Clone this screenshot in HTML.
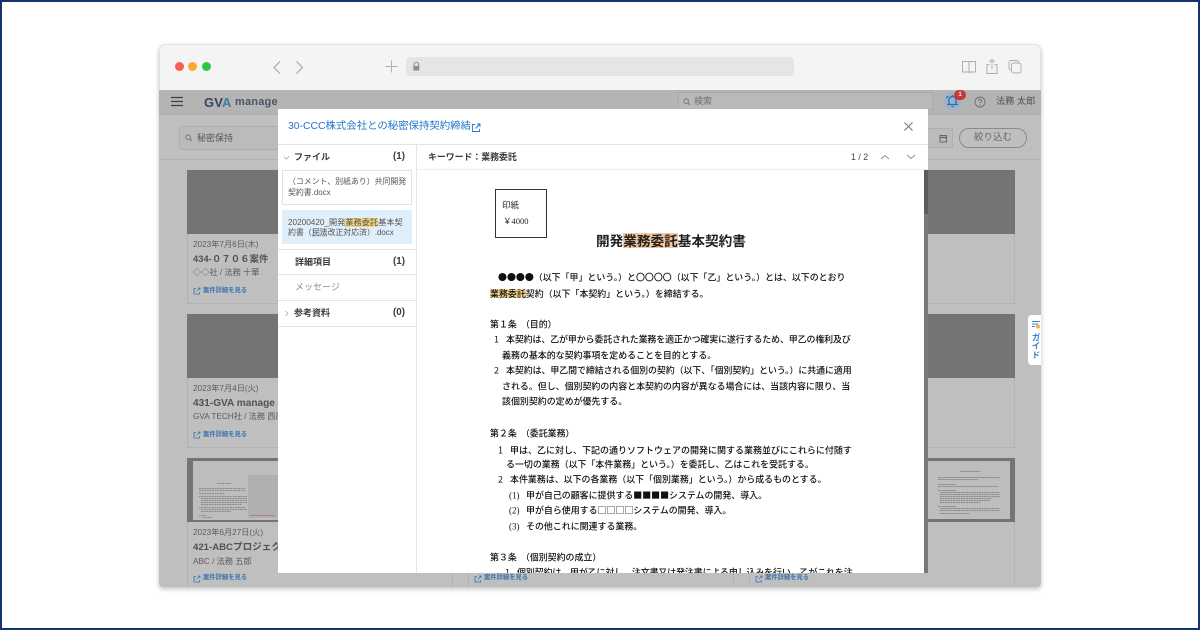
<!DOCTYPE html>
<html lang="ja"><head><meta charset="utf-8"><title>GVA manage</title>
<style>
*{box-sizing:border-box;margin:0;padding:0}
html,body{width:1200px;height:630px;overflow:hidden;background:#fff}
body{position:relative;font-family:"Liberation Sans","Noto Sans CJK JP",sans-serif}
#frame{position:absolute;inset:0;border:2px solid #12336b;z-index:50;pointer-events:none}
#blur{position:absolute;left:0;top:0;width:1200px;height:630px;filter:blur(.3px)}
.a{position:absolute}
.t{position:absolute;white-space:nowrap;line-height:1}
#win{position:absolute;left:159px;top:44px;width:882px;height:543px;border-radius:6px 6px 4px 4px;overflow:hidden;box-shadow:0 2px 5px rgba(0,0,0,.25)}
.card{position:absolute;width:266px;border:1px solid #b3b3b3;background:#bfbfbf}
.thumb{position:absolute;left:187px;width:266px;height:64px;background:#747474}
.d{position:absolute;white-space:nowrap;line-height:1;font-size:8.95px;color:#111;font-weight:500;transform:translateY(-50%);font-family:"Noto Sans CJK JP",sans-serif}
.n{display:inline-block;width:12px;font-weight:400}
.m{display:inline-block;width:17px;font-weight:400;font-family:"Liberation Serif",serif}
.date{font-size:8.2px;color:#5c5c5c}
.sub{font-size:8.2px;color:#5c5c5c}
.lnk{font-size:6.3px;font-weight:700;color:#3e75ae}
.h{font-size:9px;font-weight:700;color:#3c3c3c}
.c{font-size:9.800px;font-weight:700;color:#3c3c3c}
.f8{font-size:7.900px;color:#555}
mark{display:inline-block;line-height:1.1}
mark.y{background:#f8d88d;color:inherit}
mark.o{background:#f6c79d;color:inherit}
mark.f{background:#f3d47c;color:inherit}
</style></head><body>
<div id="blur">
<div id="win"></div>
<div class="a" style="left:159px;top:44px;width:882px;height:46px;background:#f4f4f4;border-radius:6px 6px 0 0;border:1px solid #e2e2e2;border-bottom:0"></div>
<div class="a" style="left:175px;top:62px;width:9px;height:9px;border-radius:50%;background:#f65f57"></div>
<div class="a" style="left:188px;top:62px;width:9px;height:9px;border-radius:50%;background:#f9a92f"></div>
<div class="a" style="left:202px;top:62px;width:9px;height:9px;border-radius:50%;background:#2fc544"></div>
<svg class="a" style="left:270px;top:58px" width="38" height="18" fill="none" stroke="#a0a0a0" stroke-width="1"><path d="M10 3.500 4 9.500l6 6M26.500 3.500l6 6-6 6"/></svg>
<svg class="a" style="left:384px;top:59px" width="15" height="15" fill="none" stroke="#b0b0b0" stroke-width="1"><path d="M7.500 1.500v12M1.500 7.500h12"/></svg>
<div class="a" style="left:406px;top:57px;width:388px;height:19px;background:#e5e5e5;border-radius:4px"></div>
<svg class="a" style="left:412px;top:61px" width="9" height="11"><path d="M2 5V3.500a2.300 2.300 0 0 1 4.600 0V5" fill="none" stroke="#8e8e8e"/><rect x="1.300" y="5" width="6" height="4.500" rx=".6" fill="#8e8e8e"/></svg>
<svg class="a" style="left:960px;top:58px" width="64" height="18" fill="none" stroke="#ababab" stroke-width=".9">
<path d="M2.500 3.500h5.500q1 0 1 1 0-1 1-1h5.500v10.500H10q-1 0-1 1 0-1-1-1H2.500zM9 4.500V15"/>
<path d="M29.500 6.500H27V15.500h10V6.500h-2.500M32 11V1.500M29.500 4 32 1.500 34.500 4"/>
<rect x="49" y="2.500" width="9.500" height="9.500" rx="2"/><rect x="51.500" y="5" width="9.500" height="10" rx="2" fill="#f4f4f4"/>
</svg>

<!-- app -->
<div class="a" style="left:159px;top:90px;width:882px;height:497px;background:#bfbfbf;border-radius:0 0 4px 4px"></div>
<div class="a" style="left:159px;top:90px;width:882px;height:25px;background:#b4b4b4;border-bottom:1px solid #adadad"></div>
<svg class="a" style="left:170px;top:96px" width="14" height="11" stroke="#33404f" stroke-width="1.300"><path d="M1 1.500h12M1 5.500h12M1 9.500h12"/></svg>
<div class="t" style="left:204px;top:96px;font-size:13px;font-weight:700;color:#34465f;letter-spacing:.1px">GV<span style="color:#3a7f9f">A</span></div>
<div class="t" style="left:235px;top:97px;font-size:11px;font-weight:700;color:#4a5563;letter-spacing:.2px">manage</div>
<div class="a" style="left:678px;top:92px;width:255px;height:18px;border:1px solid #a9a9a9;background:#b9b9b9"></div>
<svg class="a" style="left:683px;top:98px" width="8" height="8" fill="none" stroke="#777"><circle cx="3.200" cy="3.200" r="2.300"/><path d="M5 5l2 2"/></svg>
<div class="t" style="left:694px;top:97px;font-size:9px;color:#6e6e6e">検索</div>
<div class="a" style="left:944px;top:92px;width:17px;height:18px;border-radius:50%;background:#9fb2c4"></div>
<svg class="a" style="left:945px;top:93px" width="15" height="15" fill="none" stroke="#1672c8" stroke-width="1.300"><path d="M2 11.500h11M4 11.500V7a3.500 3.500 0 0 1 7 0v4.500M6.500 13.500h2M7.500 2v1.300M1.500 5 3 3M13.500 5 12 3"/></svg>
<div class="a" style="left:954px;top:90px;width:12px;height:10px;border-radius:5px;background:#c23a36;color:#eee;font-size:6.500px;font-weight:700;text-align:center;line-height:10px">1</div>
<svg class="a" style="left:974px;top:96px" width="12" height="12" fill="none" stroke="#6e6e6e" stroke-width=".9"><circle cx="6" cy="6" r="5"/><path d="M4.500 4.700a1.500 1.500 0 1 1 2.300 1.300c-.6.400-.8.700-.8 1.300M6 8.500v1"/></svg>
<div class="t" style="left:996px;top:97px;font-size:9.200px;color:#505050">法務 太郎</div>

<div class="a" style="left:159px;top:159px;width:882px;height:1px;background:#b1b1b1"></div>
<div class="a" style="left:179px;top:126px;width:110px;height:24px;border:1px solid #aeaeae;background:#bbb;border-radius:3px"></div>
<svg class="a" style="left:185px;top:134px" width="8" height="8" fill="none" stroke="#777"><circle cx="3.200" cy="3.200" r="2.300"/><path d="M5 5l2 2"/></svg>
<div class="t" style="left:197px;top:134px;font-size:9px;color:#555">秘密保持</div>
<div class="a" style="left:920px;top:128px;width:33px;height:20px;border:1px solid #aeaeae;background:#bbb"></div>
<svg class="a" style="left:939px;top:134px" width="9" height="9" fill="none" stroke="#666"><rect x="1" y="1.500" width="6.500" height="6.500"/><path d="M1 3.500h6.500" stroke-width="1.300"/></svg>
<div class="a" style="left:959px;top:128px;width:68px;height:20px;border:1px solid #8b8b8b;border-radius:10px;text-align:center;font-size:9.500px;line-height:18px;color:#666">絞り込む</div>

<!-- cards -->
<div class="card" style="left:187px;top:170px;height:134px"></div>
<div class="card" style="left:187px;top:314px;height:134px"></div>
<div class="card" style="left:187px;top:458px;height:129px;border-bottom:0"></div>
<div class="card" style="left:468px;top:458px;height:129px;border-bottom:0"></div>
<div class="card" style="left:749px;top:170px;height:134px"></div>
<div class="card" style="left:749px;top:314px;height:134px"></div>
<div class="card" style="left:749px;top:458px;height:129px;border-bottom:0"></div>
<div class="thumb" style="top:170px"></div>
<div class="thumb" style="top:314px"></div>
<div class="thumb" style="top:458px"></div>
<div class="thumb" style="left:749px;top:170px"></div>
<div class="thumb" style="left:749px;top:314px"></div>
<div class="thumb" style="left:749px;top:458px"></div>

<div class="a" style="left:193px;top:461px;width:85px;height:59px;background:#bdbdbd"></div>
<div class="a" style="left:248px;top:475px;width:30px;height:43px;background:#b0b0b0"></div>
<svg class="a" style="left:198px;top:480px" width="80" height="40" stroke="#6f6f6f" stroke-width=".6" stroke-dasharray="2 .6">
<path d="M19 3.300h14M1 8.300h46M1 10.300h46M1 13.300h26M1 16.300h48M3 18.300h46M3 20.300h46M3 22.300h46M3 24.300h40M1 27.300h46M3 29.300h46M3 31.300h30M1 35.300h8"/>
<path d="M4 37.300h10M52 35.300h25" stroke="#a5676f" stroke-dasharray="none"/></svg>
<div class="a" style="left:760px;top:461px;width:250px;height:58px;background:#bdbdbd"></div>
<svg class="a" style="left:930px;top:465px" width="80" height="50" stroke="#6d6d6d" stroke-width=".6" stroke-dasharray="2 .6">
<path d="M30 6.300h20M8 12.300h62M8 14.300h40M8 19.300h18M8 21.300h60M8 25.300h18M10 27.300h60M10 29.300h60M10 31.300h60M10 33.300h52M10 35.300h50M10 37.300h40M8 41.300h18M10 43.300h60M10 45.300h60M10 48.300h30"/></svg>

<div class="t date" style="left:193px;top:241px">2023年7月6日(木)</div>
<div class="t" style="left:193px;top:255px;font-size:9.300px;font-weight:700;color:#525252;letter-spacing:.1px">434-０７０６案件</div>
<div class="t sub" style="left:193px;top:269px">◇◇社 / 法務 十華</div>
<div class="t lnk" style="left:203px;top:288px">案件詳細を見る</div>
<div class="t date" style="left:193px;top:385px">2023年7月4日(火)</div>
<div class="t" style="left:193px;top:399px;font-size:10.100px;font-weight:700;color:#525252">431-GVA manage</div>
<div class="t sub" style="left:193px;top:413px">GVA TECH社 / 法務 西尾</div>
<div class="t lnk" style="left:203px;top:432px">案件詳細を見る</div>
<div class="t date" style="left:193px;top:529px">2023年6月27日(火)</div>
<div class="t" style="left:193px;top:543px;font-size:9.600px;font-weight:700;color:#525252">421-ABCプロジェクト</div>
<div class="t sub" style="left:193px;top:558px">ABC / 法務 五郎</div>
<div class="t lnk" style="left:203px;top:575px">案件詳細を見る</div>
<div class="t lnk" style="left:484px;top:575px">案件詳細を見る</div>
<div class="t lnk" style="left:765px;top:575px">案件詳細を見る</div>
<svg class="a" style="left:193px;top:287px" width="8" height="8" fill="none" stroke="#3e75ae" stroke-width=".8"><path d="M3 1.500H1v5.500h5.500V5M4 4l3-3M5 1h2v2"/></svg>
<svg class="a" style="left:193px;top:431px" width="8" height="8" fill="none" stroke="#3e75ae" stroke-width=".8"><path d="M3 1.500H1v5.500h5.500V5M4 4l3-3M5 1h2v2"/></svg>
<svg class="a" style="left:193px;top:575px" width="8" height="8" fill="none" stroke="#3e75ae" stroke-width=".8"><path d="M3 1.500H1v5.500h5.500V5M4 4l3-3M5 1h2v2"/></svg>
<svg class="a" style="left:474px;top:575px" width="8" height="8" fill="none" stroke="#3e75ae" stroke-width=".8"><path d="M3 1.500H1v5.500h5.500V5M4 4l3-3M5 1h2v2"/></svg>
<svg class="a" style="left:755px;top:575px" width="8" height="8" fill="none" stroke="#3e75ae" stroke-width=".8"><path d="M3 1.500H1v5.500h5.500V5M4 4l3-3M5 1h2v2"/></svg>

<!-- guide tab -->
<div class="a" style="left:1028px;top:315px;width:13px;height:50px;background:#fff;border-radius:4px 0 0 4px"></div>
<svg class="a" style="left:1032px;top:320px" width="9" height="10"><path d="M0 1.500h8M0 4h6M0 6.500h3" stroke="#3b87d8" stroke-width="1"/><circle cx="6" cy="6.500" r="2" fill="#f2b33d"/></svg>
<div class="t" style="left:1031px;top:333px;width:9px;font-size:8.600px;font-weight:700;color:#3a7fd0;writing-mode:vertical-rl">ガイド</div>

<!-- modal -->
<div class="a" style="left:278px;top:109px;width:650px;height:464px;background:#fff"></div>
<div class="t" style="left:288px;top:122px;font-size:10.400px;color:#2377c9">30-CCC株式会社との秘密保持契約締結</div>
<svg class="a" style="left:471px;top:123px" width="10" height="10" fill="none" stroke="#2377c9" stroke-width=".9"><path d="M4 1.500H1.500v7h7V6M4.500 5.500 8.500 1.500M6 1h3v3"/></svg>
<svg class="a" style="left:903px;top:121px" width="11" height="11" stroke="#7a7a7a" stroke-width="1.100"><path d="M1.500 1.500l8 8M9.500 1.500l-8 8"/></svg>
<div class="a" style="left:278px;top:144px;width:650px;height:1px;background:#e2e2e2"></div>
<div class="a" style="left:416px;top:144px;width:1px;height:429px;background:#e5e5e5"></div>
<div class="a" style="left:417px;top:169px;width:511px;height:1px;background:#eee"></div>

<svg class="a" style="left:283px;top:155px" width="7" height="6" fill="none" stroke="#aaa" stroke-width=".8"><path d="M1 1.500l2.500 2.500L6 1.500"/></svg>
<div class="t h" style="left:294px;top:153px">ファイル</div>
<div class="t c" style="left:393px;top:152px">(1)</div>
<div class="a" style="left:282px;top:170px;width:130px;height:35px;border:1px solid #e2e2e2"></div>
<div class="t f8" style="left:288px;top:178px">（コメント、別紙あり）共同開発</div>
<div class="t f8" style="left:288px;top:189px">契約書.docx</div>
<div class="a" style="left:282px;top:210px;width:130px;height:34px;background:#deeefb"></div>
<div class="t f8" style="left:288px;top:218px;font-size:8.200px">20200420_開発<mark class="f">業務委託</mark>基本契</div>
<div class="t f8" style="left:288px;top:229px">約書（<span style="background:#ccd9e4">民法</span>改正対応済）.docx</div>
<div class="a" style="left:278px;top:249px;width:138px;height:1px;background:#e5e5e5"></div>
<div class="t h" style="left:295px;top:258px">詳細項目</div>
<div class="t c" style="left:393px;top:257px">(1)</div>
<div class="a" style="left:278px;top:274px;width:138px;height:1px;background:#e5e5e5"></div>
<div class="t" style="left:295px;top:283px;font-size:9px;color:#8a8a8a">メッセージ</div>
<div class="a" style="left:278px;top:300px;width:138px;height:1px;background:#e5e5e5"></div>
<svg class="a" style="left:284px;top:310px" width="6" height="7" fill="none" stroke="#aaa" stroke-width=".8"><path d="M1.500 1l2.500 2.500L1.500 6"/></svg>
<div class="t h" style="left:294px;top:309px">参考資料</div>
<div class="t c" style="left:393px;top:308px">(0)</div>
<div class="a" style="left:278px;top:326px;width:138px;height:1px;background:#e5e5e5"></div>

<div class="t" style="left:428px;top:153px;font-size:8.900px;font-weight:700;color:#3c3c3c">キーワード：業務委託</div>
<div class="t" style="left:851px;top:153px;font-size:8.800px;color:#444">1 / 2</div>
<svg class="a" style="left:880px;top:153px" width="36" height="8" fill="none" stroke="#8c8c8c" stroke-width="1"><path d="M1 6l4-3.500L9 6M27 2l4 3.500L35 2"/></svg>

<!-- doc -->
<div class="a" style="left:924px;top:170px;width:4px;height:403px;background:#787878"></div>
<div class="a" style="left:924px;top:170px;width:4px;height:44px;background:#5c5c5c"></div>
<div class="a" style="left:495px;top:189px;width:52px;height:49px;border:1px solid #333"></div>
<div class="t" style="left:502px;top:201px;font-size:8.500px;color:#222">印紙</div>
<div class="t" style="left:503px;top:217px;font-size:8.500px;color:#222;font-family:'Liberation Serif','Noto Sans CJK JP',serif">￥4000</div>
<div class="t" style="left:596px;top:233px;font-size:13.640px;font-weight:700;color:#222;font-family:'Noto Sans CJK JP',sans-serif">開発<mark class="o">業務委託</mark>基本契約書</div>

<div class="d" style="left:498px;top:278px">●●●●（以下「甲」という。）と〇〇〇〇（以下「乙」という。）とは、以下のとおり</div>
<div class="d" style="left:490px;top:293.500px"><mark class="y">業務委託</mark>契約（以下「本契約」という。）を締結する。</div>
<div class="d" style="left:490px;top:324.500px">第１条&nbsp; （目的）</div>
<div class="d" style="left:494px;top:340px;letter-spacing:-.1px"><span class="n">1</span>本契約は、乙が甲から委託された業務を適正かつ確実に遂行するため、甲乙の権利及び</div>
<div class="d" style="left:502px;top:355.500px">義務の基本的な契約事項を定めることを目的とする。</div>
<div class="d" style="left:494px;top:371px;letter-spacing:-.06px"><span class="n">2</span>本契約は、甲乙間で締結される個別の契約（以下、「個別契約」という。）に共通に適用</div>
<div class="d" style="left:502px;top:386.500px">される。但し、個別契約の内容と本契約の内容が異なる場合には、当該内容に限り、当</div>
<div class="d" style="left:502px;top:402px">該個別契約の定めが優先する。</div>
<div class="d" style="left:490px;top:433.500px">第２条&nbsp; （委託業務）</div>
<div class="d" style="left:498px;top:449.500px;font-size:9px"><span class="n">1</span>甲は、乙に対し、下記の通りソフトウェアの開発に関する業務並びにこれらに付随す</div>
<div class="d" style="left:506px;top:465px">る一切の業務（以下「本件業務」という。）を委託し、乙はこれを受託する。</div>
<div class="d" style="left:498px;top:480px"><span class="n">2</span>本件業務は、以下の各業務（以下「個別業務」という。）から成るものとする。</div>
<div class="d" style="left:509px;top:495.500px"><span class="m">(1)</span>甲が自己の顧客に提供する■■■■システムの開発、導入。</div>
<div class="d" style="left:509px;top:511px"><span class="m">(2)</span>甲が自ら使用する□□□□システムの開発、導入。</div>
<div class="d" style="left:509px;top:526.500px"><span class="m">(3)</span>その他これに関連する業務。</div>
<div class="d" style="left:490px;top:557.500px">第３条&nbsp; （個別契約の成立）</div>
<div class="a" style="left:417px;top:565px;width:507px;height:8px;overflow:hidden"><div class="d" style="left:88px;top:8px;letter-spacing:-.1px"><span class="n">1</span>個別契約は、甲が乙に対し、注文書又は発注書による申し込みを行い、乙がこれを注</div></div>
</div>
<div id="frame"></div>
</body></html>
